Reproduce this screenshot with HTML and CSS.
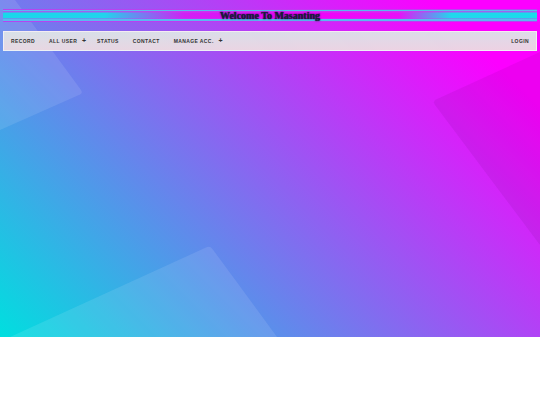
FILE: index.html
```html
<!DOCTYPE html>
<html lang="en">
<head>
<meta charset="utf-8">
<title>Welcome To Masanting</title>
<link rel="stylesheet" href="styles.css">
</head>
<body>
<section class="hero">
  <svg class="shapes" viewBox="0 0 540 337" preserveAspectRatio="none" aria-hidden="true">
    <path class="light" d="M0 0 L15 0 L81 90 Q83 93 80 94.5 L0 130 Z"/>
    <path class="light" d="M10 337 L206 247.5 Q210 245.5 212.5 249 L277 337 Z"/>
    <path class="dark" d="M540 52 L436 99.5 Q432.5 101.5 435 105 L540 245 Z"/>
  </svg>
  <div class="content">
    <h1 class="banner"><span class="banner-text">Welcome To Masanting</span></h1>
    <nav class="navbar">
      <ul class="menu">
        <li class="item">Record</li>
        <li class="item dropdown">All User <span class="plus">+</span></li>
        <li class="item">Status</li>
        <li class="item">Contact</li>
        <li class="item dropdown">Manage Acc. <span class="plus">+</span></li>
      </ul>
      <ul class="menu">
        <li class="item">Login</li>
      </ul>
    </nav>
  </div>
</section>
</body>
</html>
```
FILE: styles.css
```css
html, body {
  margin: 0;
  padding: 0;
  background: #ffffff;
}

.hero {
  position: relative;
  height: 337px;
  overflow: hidden;
  background: linear-gradient(45deg, #00dfdf 0%, #fc00ff 88%);
}

.shapes {
  position: absolute;
  left: 0;
  top: 0;
  width: 100%;
  height: 100%;
}

.shapes .light {
  fill: rgba(255, 255, 255, 0.1);
}

.shapes .dark {
  fill: rgba(40, 0, 60, 0.07);
}

.content {
  position: relative;
  padding: 9px 3px 0;
}

.banner {
  margin: 0;
  height: 13px;
  display: flex;
  align-items: center;
  justify-content: center;
  background:
    linear-gradient(to bottom,
      rgba(190, 60, 240, 0.95) 0px, rgba(190, 60, 240, 0.95) 1px,
      #5ab8f0 1px, #5ab8f0 2.5px,
      rgba(200, 60, 240, 0.75) 2.5px, rgba(200, 60, 240, 0) 4.5px,
      rgba(200, 60, 240, 0) 8.5px, rgba(200, 60, 240, 0.75) 10.5px,
      #5ab8f0 10.5px, #5ab8f0 12px,
      rgba(190, 60, 240, 0.95) 12px, rgba(190, 60, 240, 0.95) 13px),
    linear-gradient(to right,
      #18d8ea 0%, #20d4ec 19%, #d020f4 34%, #f000fa 55%,
      #e810f8 74%, #20d8ec 84%, #18dcea 100%);
}

.banner-text {
  font-family: "Liberation Serif", "Times New Roman", serif;
  font-weight: bold;
  font-size: 10px;
  line-height: 13px;
  color: #1a1838;
  text-shadow: 0 0 1px #202050, 0 0 2px rgba(20, 20, 70, 0.8);
}

.navbar {
  margin-top: 9px;
  height: 20px;
  box-sizing: border-box;
  display: flex;
  justify-content: space-between;
  align-items: center;
  padding: 0 7px;
  background: linear-gradient(to bottom, rgba(220, 228, 232, 0.96), rgba(236, 218, 226, 0.96));
  border: 1px solid rgba(255, 255, 255, 0.55);
}

.menu {
  list-style: none;
  margin: 0;
  padding: 0;
  display: flex;
  align-items: center;
  gap: 14px;
}

.item {
  font-family: "Liberation Sans", Arial, sans-serif;
  font-weight: bold;
  font-size: 5px;
  letter-spacing: 0.4px;
  text-transform: uppercase;
  color: #333333;
  line-height: 18px;
  white-space: nowrap;
}

.dropdown {
  margin-right: -3px;
}

.plus {
  font-size: 7px;
  margin-left: 3px;
  letter-spacing: 0;
}
```
